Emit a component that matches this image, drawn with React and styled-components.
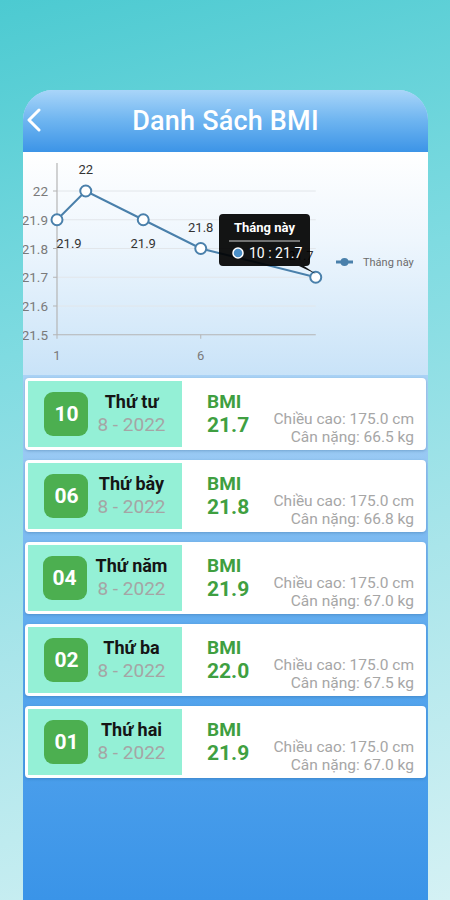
import React from 'react'
import styled, { createGlobalStyle } from 'styled-components'

const GlobalStyle = createGlobalStyle`
   html, body {
      margin: 0;
      padding: 0;
   }
   body {
      width: 450px;
      height: 900px;
      overflow: hidden;
      font-family: Roboto, "Noto Sans", sans-serif;
      background: linear-gradient(165deg, #4ccad1 0%, #7fdbe1 35%, #a9e5ea 65%, #d4f1f4 100%);
   }
`

const records = [
   { day: '10', name: 'Thứ tư', bmi: '21.7', height: '175.0', weight: '66.5' },
   { day: '06', name: 'Thứ bảy', bmi: '21.8', height: '175.0', weight: '66.8' },
   { day: '04', name: 'Thứ năm', bmi: '21.9', height: '175.0', weight: '67.0' },
   { day: '02', name: 'Thứ ba', bmi: '22.0', height: '175.0', weight: '67.5' },
   { day: '01', name: 'Thứ hai', bmi: '21.9', height: '175.0', weight: '67.0' },
]

// chart scale
const X0 = 34
const STEP = 28.75
const Y22 = 39
const px = (v) => X0 + (v - 1) * STEP
const py = (v) => Y22 + (22 - v) * 287.5

const points = [
   { x: 1, y: 21.9, label: '21.9', lx: 46, below: true },
   { x: 2, y: 22.0, label: '22', below: false },
   { x: 4, y: 21.9, label: '21.9', below: true },
   { x: 6, y: 21.8, label: '21.8', below: false },
   { x: 10, y: 21.7, label: '21.7', lx: 278, below: false },
]

const LINE = '#4a80ab'

const Chart = () => {
   const ticks = [22, 21.9, 21.8, 21.7, 21.6, 21.5]
   const path = points.map((p, i) => `${i ? 'L' : 'M'}${px(p.x)} ${py(p.y)}`).join(' ')
   return (
      <svg width="405" height="223" viewBox="0 0 405 223">
         {ticks.map((t) => (
            <g key={t}>
               {t !== 21.5 && <line x1={X0} x2={px(10)} y1={py(t)} y2={py(t)} stroke="#e2e6ea" strokeWidth="1" />}
               <line x1={X0 - 4} x2={X0} y1={py(t)} y2={py(t)} stroke="#b5b5b5" strokeWidth="1" />
               <text x="25" y={py(t) + 5} textAnchor="end" fontSize="13.5" fill="#7a7a7a">
                  {t === 22 ? '22' : t.toFixed(1)}
               </text>
            </g>
         ))}
         <line x1={X0} x2={X0} y1="11" y2={py(21.5)} stroke="#b5b5b5" strokeWidth="1.2" />
         <line x1={X0} x2={px(10)} y1={py(21.5)} y2={py(21.5)} stroke="#b5b5b5" strokeWidth="1.2" />
         <line x1={X0} x2={X0} y1={py(21.5)} y2={py(21.5) + 4} stroke="#b5b5b5" />
         <line x1={px(6)} x2={px(6)} y1={py(21.5)} y2={py(21.5) + 4} stroke="#b5b5b5" />
         <text x={X0} y="208" textAnchor="middle" fontSize="13" fill="#7a7a7a">1</text>
         <text x={px(6)} y="208" textAnchor="middle" fontSize="13" fill="#7a7a7a">6</text>

         <path d={path} fill="none" stroke={LINE} strokeWidth="2" />
         {points.map((p) => (
            <g key={p.x}>
               <circle cx={px(p.x)} cy={py(p.y)} r="5.5" fill="#fff" stroke={LINE} strokeWidth="2" />
               <text
                  x={p.lx ?? px(p.x)}
                  y={p.below ? py(p.y) + 28 : py(p.y) - 17}
                  textAnchor="middle"
                  fontSize="13"
                  fill="#333"
               >
                  {p.label}
               </text>
            </g>
         ))}

         {/* tooltip */}
         <path
            d="M200 62 H283 Q287 62 287 66 V110 Q287 114 283 114 H281 L293 122 L276 114 H200 Q196 114 196 110 V66 Q196 62 200 62 Z"
            fill="#000"
            fillOpacity="0.92"
         />
         <text x="241.5" y="80" textAnchor="middle" fontSize="13" fontWeight="700" fill="#fff">Tháng này</text>
         <line x1="206" x2="277" y1="89" y2="89" stroke="#d0d0d0" strokeWidth="1" />
         <circle cx="215" cy="101" r="5" fill="#4b8fc7" stroke="#fff" strokeWidth="1.5" />
         <text x="226" y="106" fontSize="14" fill="#fff">10 : 21.7</text>

         {/* legend */}
         <line x1="313" x2="330" y1="110" y2="110" stroke={LINE} strokeWidth="3" />
         <circle cx="321.5" cy="110" r="4" fill={LINE} />
         <text x="340" y="114" fontSize="11" fill="#6c6c6c">Tháng này</text>
      </svg>
   )
}

const BackIcon = () => (
   <svg width="16" height="24" viewBox="0 0 16 24">
      <path d="M13 2 L3 12 L13 22" fill="none" stroke="#fff" strokeWidth="3" strokeLinecap="round" strokeLinejoin="round" />
   </svg>
)

const App = () => {
   return (
      <>
         <GlobalStyle />
         <Page>
            <Frame>
               <Header>
                  <BackButton><BackIcon /></BackButton>
                  <Title>Danh Sách BMI</Title>
               </Header>
               <ChartArea>
                  <Chart />
               </ChartArea>
               <List>
                  {records.map((r) => (
                     <Card key={r.day}>
                        <DatePanel>
                           <DayBadge>{r.day}</DayBadge>
                           <DateText>
                              <DayName>{r.name}</DayName>
                              <MonthYear>8 - 2022</MonthYear>
                           </DateText>
                        </DatePanel>
                        <BmiBlock>
                           <BmiLabel>BMI</BmiLabel>
                           <BmiValue>{r.bmi}</BmiValue>
                        </BmiBlock>
                        <Measures>
                           <span>Chiều cao: {r.height} cm</span>
                           <span>Cân nặng: {r.weight} kg</span>
                        </Measures>
                     </Card>
                  ))}
               </List>
            </Frame>
         </Page>
      </>
   )
}

const Page = styled.div`
   height: 900px;
   padding: 90px 22px 0 23px;
   box-sizing: border-box;
`

const Frame = styled.div`
   width: 405px;
   height: 810px;
   border-radius: 30px 30px 0 0;
   overflow: hidden;
   display: flex;
   flex-direction: column;
   background: linear-gradient(180deg, #c4e1f8 0%, #a6d0f5 40%, #5aa8ee 68%, #3a94e8 100%);
`

const Header = styled.div`
   height: 62px;
   flex-shrink: 0;
   display: flex;
   align-items: center;
   justify-content: center;
   position: relative;
   background: linear-gradient(180deg, #a9d5f9 0%, #6db4f0 50%, #3c94e7 100%);
`

const BackButton = styled.div`
   position: absolute;
   left: 3px;
   top: 18px;
   display: flex;
`

const Title = styled.h1`
   margin: 0;
   color: #fff;
   font-size: 27px;
   font-weight: 500;
   letter-spacing: 0.2px;
`

const ChartArea = styled.div`
   height: 223px;
   flex-shrink: 0;
   background: linear-gradient(180deg, #ffffff 0%, #eef6fd 40%, #c9e3f8 100%);
   svg {
      display: block;
      font-family: Roboto, sans-serif;
   }
`

const List = styled.div`
   display: flex;
   flex-direction: column;
   gap: 10px;
   padding: 3px 2px 0;
`

const Card = styled.div`
   height: 72px;
   box-sizing: border-box;
   padding: 3px;
   background: #fff;
   border-radius: 4px;
   box-shadow: 0 1px 3px rgba(40, 90, 140, 0.35);
   display: flex;
   align-items: stretch;
`

const DatePanel = styled.div`
   width: 154px;
   flex-shrink: 0;
   background: #94f0d6;
   display: flex;
   align-items: center;
   justify-content: center;
   gap: 9px;
`

const DayBadge = styled.div`
   width: 44px;
   height: 44px;
   border-radius: 9px;
   background: #4caf50;
   color: #fff;
   font-size: 21px;
   font-weight: 700;
   display: flex;
   align-items: center;
   justify-content: center;
`

const DateText = styled.div`
   display: flex;
   flex-direction: column;
   align-items: center;
`

const DayName = styled.span`
   font-size: 18px;
   font-weight: 700;
   color: #151515;
   line-height: 22px;
`

const MonthYear = styled.span`
   font-size: 19px;
   color: #a5a5a5;
   line-height: 24px;
`

const BmiBlock = styled.div`
   margin-left: 25px;
   display: flex;
   flex-direction: column;
   justify-content: center;
   color: #3f9f41;
   font-weight: 700;
`

const BmiLabel = styled.span`
   font-size: 19px;
   line-height: 23px;
`

const BmiValue = styled.span`
   font-size: 21px;
   line-height: 25px;
`

const Measures = styled.div`
   margin-left: auto;
   padding: 0 9px 1px 0;
   display: flex;
   flex-direction: column;
   justify-content: flex-end;
   align-items: flex-end;
   font-size: 15.5px;
   line-height: 18px;
   color: #a6a6a6;
   white-space: nowrap;
`

export default App
